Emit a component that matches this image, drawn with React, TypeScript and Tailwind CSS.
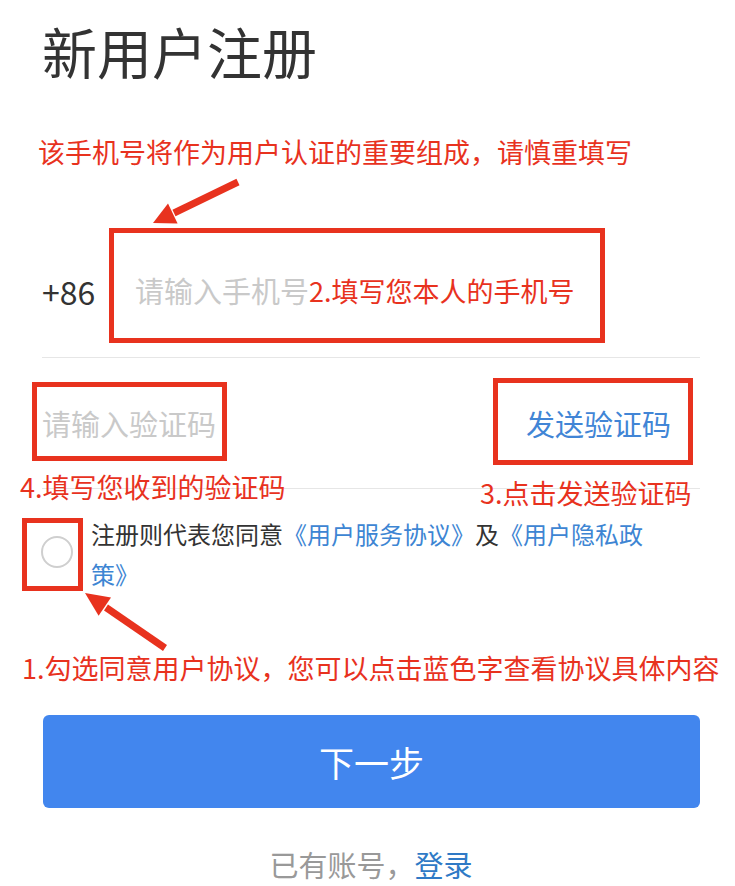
import React from 'react'

const RED = '#e8321e'

const Overlay = () => (
  <svg className="absolute inset-0 pointer-events-none" width="735" height="886" viewBox="0 0 735 886">
    <g fill="none" stroke={RED} strokeWidth="5">
      <rect x="111.5" y="230.5" width="491" height="110" />
      <rect x="34.5" y="384.5" width="190" height="74" />
      <rect x="495.5" y="380.5" width="195" height="82" />
      <rect x="24.5" y="520.5" width="56" height="68" />
    </g>
    {/* arrow to the phone box */}
    <line x1="238" y1="182" x2="174" y2="213" stroke={RED} strokeWidth="7" />
    <polygon points="153,223 177.6,223.4 168,203.6" fill={RED} />
    {/* arrow to the checkbox */}
    <line x1="165" y1="648" x2="106" y2="607.5" stroke={RED} strokeWidth="7" />
    <polygon points="85,593 111,597.5 98.6,615.7" fill={RED} />
  </svg>
)

export default function App() {
  return (
    <div className="relative w-[735px] h-[886px] overflow-hidden bg-white font-['Noto_Sans_CJK_SC',sans-serif]">
      <div className="flex flex-col pl-[42px] pr-[35px]">
        <h1 className="mt-[23px] text-[55px] leading-none font-normal text-[#333]">新用户注册</h1>

        <p className="mt-[60px] -ml-[4px] text-[27px] leading-none whitespace-nowrap text-[#e8321e]">
          该手机号将作为用户认证的重要组成，请慎重填写
        </p>

        <div className="mt-[59px] h-[134px] box-border flex items-center border-b border-[#e6e6e6]">
          <span className="w-[93px] text-[32px] leading-none text-[#333]">+86</span>
          <span className="text-[29px] leading-none text-[#c9c9c9]">请输入手机号</span>
          <span className="text-[27px] leading-none text-[#e8321e]">2.填写您本人的手机号</span>
        </div>

        <div className="h-[131px] box-border flex items-center justify-between border-b border-[#e6e6e6]">
          <span className="text-[29px] leading-none text-[#c9c9c9]">请输入验证码</span>
          <span className="mr-[29px] text-[29px] leading-none text-[#4185d6]">发送验证码</span>
        </div>

        <div className="mt-[25px] flex items-start">
          <span className="mt-[22px] -ml-[1px] w-[32px] h-[32px] shrink-0 rounded-full border-2 border-[#cfcfcf]" />
          <p className="ml-[18px] w-[565px] text-[24px] leading-[40px] text-[#333]">
            注册则代表您同意<span className="text-[#3d85d3]">《用户服务协议》</span>及<span className="text-[#3d85d3]">《用户隐私政策》</span>
          </p>
        </div>

        <p className="mt-[60px] -ml-[20px] text-[27px] leading-none whitespace-nowrap text-[#e8321e]">
          1.勾选同意用户协议，您可以点击蓝色字查看协议具体内容
        </p>

        <button className="mt-[34px] ml-[1px] h-[93px] rounded-[6px] bg-[#4286ee] flex items-center justify-center text-[35px] leading-none text-white">
          下一步
        </button>

        <p className="mt-[42px] text-center text-[29px] leading-none text-[#999]">
          已有账号，<span className="text-[#2f7ac6]">登录</span>
        </p>
      </div>

      <span className="absolute left-[20px] top-[473px] text-[27px] leading-none whitespace-nowrap text-[#e8321e]">
        4.填写您收到的验证码
      </span>
      <span className="absolute left-[480px] top-[479px] text-[27px] leading-none whitespace-nowrap text-[#e8321e]">
        3.点击发送验证码
      </span>

      <Overlay />
    </div>
  )
}
